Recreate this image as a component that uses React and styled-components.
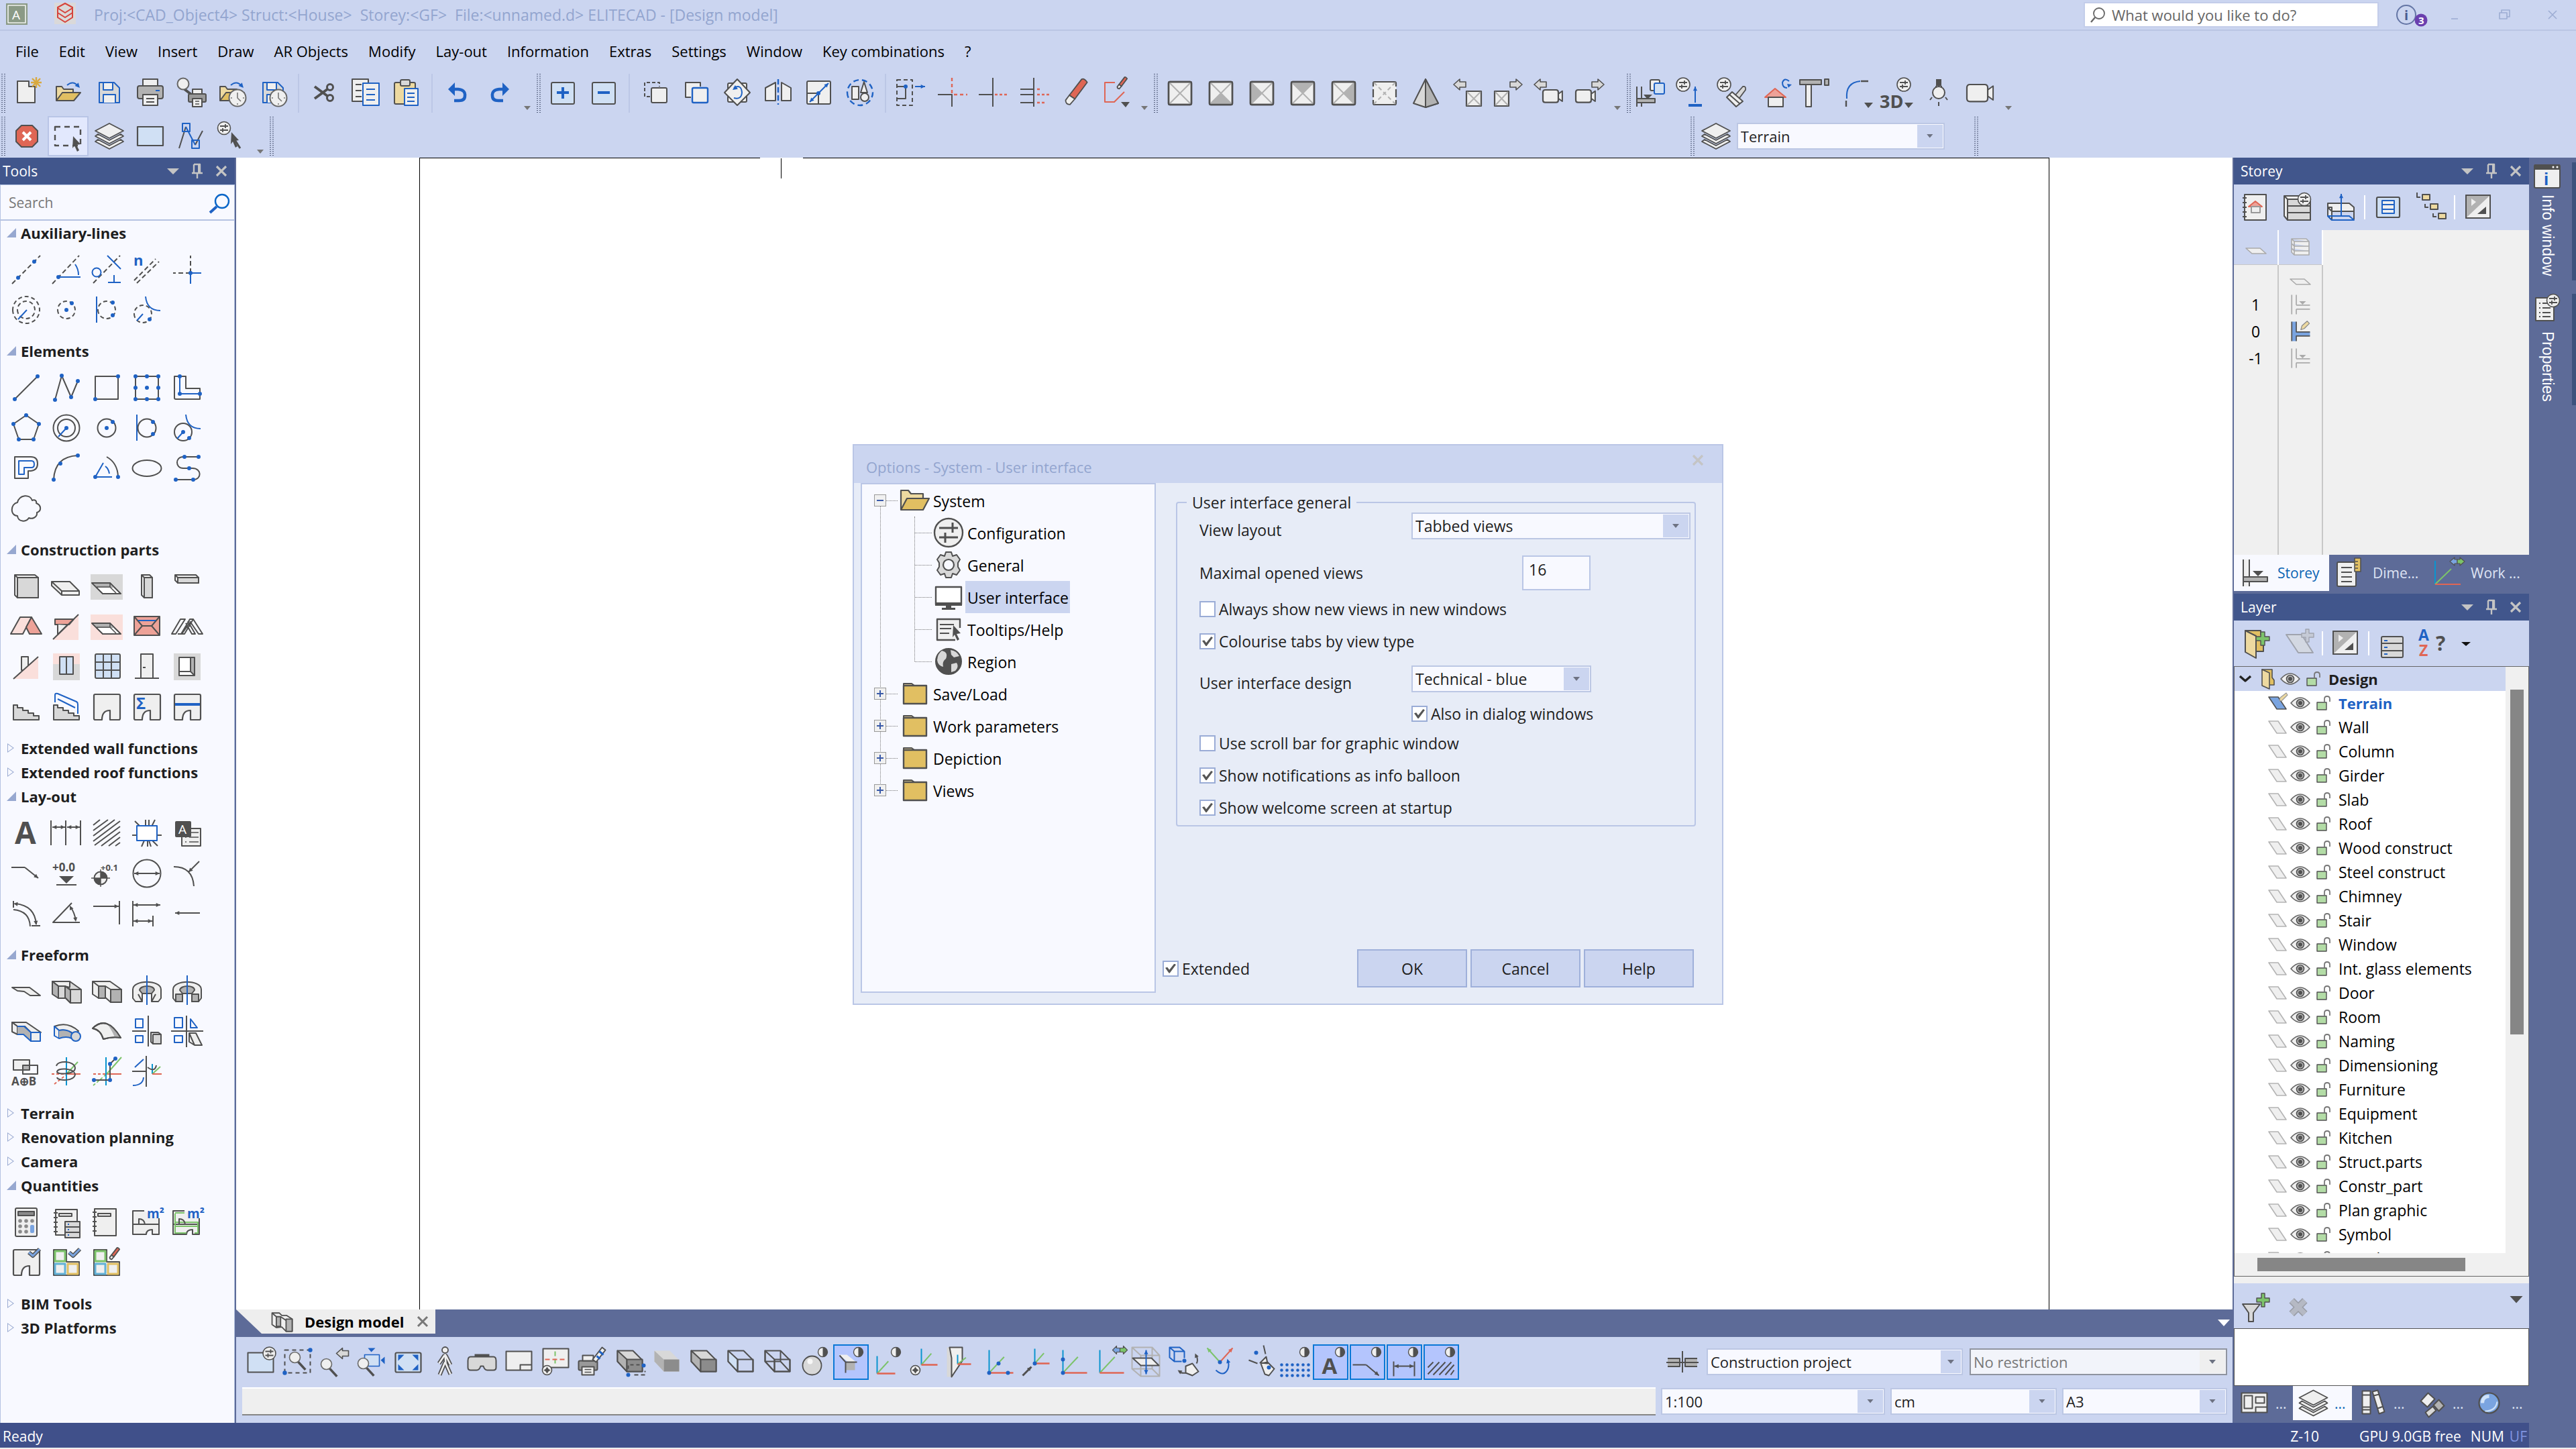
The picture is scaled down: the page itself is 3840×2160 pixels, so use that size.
import React from "react";
import styled, { createGlobalStyle, css } from "styled-components";

/* ---------- palette ---------- */
const K = "#505050";
const B = "#1f62c4";
const F = "#efefef";
const G = "#d8d8d8";
const M = "#b2b2b2";
const R = "#df6655";
const PK = "#fadfdb";
const SR = "#eda298";
const N = "#7cc36a";
const Y = "#e1bf62";
const YL = "#edd9a0";
const LB = "#d0e0f4";
const C = "#0a94cf";
const AB = "#7aa4e0";

const bar = "#cbd5f0";
const paper = "#f8f9ff";
const edge = "#b5c3e2";
const header = "#41568c";
const dock = "#5d6b98";
const status = "#40508a";

/* ---------- icon drawing helpers, all on a 60 x 60 field ---------- */
const p = (d, fill = "none", stroke = K, w = 2, dash) => ({ d, fill, stroke, w, dash });
const b = (d, fill = "none", w = 2) => p(d, fill, B, w);
const fl = (d, fill = K) => p(d, fill, "none", 0);
const tx = (text, x, y, size, fill = K, weight = 700) => ({ text, x, y, size, fill, weight });
const ci = (x, y, r) => `M${x - r} ${y}a${r} ${r} 0 1 0 ${2 * r} 0a${r} ${r} 0 1 0 ${-2 * r} 0Z`;
const re = (x, y, w, h) => `M${x} ${y}h${w}v${h}h${-w}Z`;
const rr = (x, y, w, h, r = 2) =>
  `M${x + r} ${y}h${w - 2 * r}q${r} 0 ${r} ${r}v${h - 2 * r}q0 ${r} ${-r} ${r}h${2 * r - w}q${-r} 0 ${-r} ${-r}v${2 * r - h}q0 ${-r} ${r} ${-r}Z`;
const dots = (list, r = 3, c = B) =>
  fl(list.split(" ").map((s) => { const [x, y] = s.split(",").map(Number); return ci(x, y, r); }).join(""), c);
const head = (x1, y1, x2, y2, c = K, s = 7) => {
  const a = Math.atan2(y2 - y1, x2 - x1);
  const q = (t) => `${x2 - s * Math.cos(a + t)} ${y2 - s * Math.sin(a + t)}`;
  return fl(`M${x2} ${y2}L${q(0.45)}L${q(-0.45)}Z`, c);
};
const ar = (x1, y1, x2, y2, c = K, w = 2) => [p(`M${x1} ${y1}L${x2} ${y2}`, "none", c, w), head(x1, y1, x2, y2, c)];
const dbl = (x1, y1, x2, y2, c = K) => [ar(x1, y1, x2, y2, c), head(x2, y2, x1, y1, c)];

const badge = (x, y, r = 9.5) => [
  p(ci(x, y, r), F, K, 1.6),
  p(`M${x - 6} ${y - 3}h12M${x - 6} ${y + 3}h12M${x + 2} ${y - 6}v6M${x - 2} ${y}v6`, "none", K, 1.8),
];
const contrast = (x, y) => [p(ci(x, y, 7), F, K, 1.4), fl(`M${x} ${y - 7}a7 7 0 0 1 0 14Z`)];
const clock = (x, y) => [p(ci(x, y, 12.5), F, "#666", 2), p(`M${x} ${y - 8}v8l5 5M${x - 10} ${y}h2M${x + 8} ${y}h2M${x} ${y + 8}v2`, "none", "#777", 1.6)];
const mag = (x, y, r = 8) => [p(`M${x + r * 0.6} ${y + r * 0.8}l11 12`, "none", K, 3.6), p(ci(x, y, r), F, "#6a6a6a", 1.6)];
const axes = (x = 16, y = 46, h = 34, w = 33) => [
  p(`M${x} ${y}v${-h}`, "none", C, 2), p(`M${x} ${y}l${w * 0.62} ${-h * 0.7}`, "none", N, 2), p(`M${x} ${y}h${w}`, "none", R, 2.6),
];
const targ = (x, y) => [p(ci(x, y, 7), F, K, 1.6), fl(`M${x} ${y - 5}l2 3l3 2l-3 2l-2 3l-2 -3l-3 -2l3 -2Z`)];
const folder = [p("M12 41V20H20L23 24H37V30", YL), p("M12 41L21 29H48L38 41Z", Y), b("M28 18q9 -8 17 2"), head(39, 13, 47, 22, B, 8)];
const floppy = [b("M15 14H37L45 22V44H15Z", G), b("M21 14H35V25H21Z", F), b("M21 44V32H39V44", F)];
const printer = [p(rr(11, 19, 38, 19, 3), M), p(re(19, 9, 22, 10), F), p(re(19, 32, 22, 16), F), p("M24 38h12M24 43h12"), b("M38 26h6")];
const room = p("M23 49H13Q11 49 11 47V13Q11 11 13 11H48Q50 11 50 13V47Q50 49 48 49H35V35Q23 35 23 49Z", F, K, 2.2);
const hole = [p("M8 25H35L51 41H24Z", "#fff", K, 1.8), fl("M10 26H35L42 32H16Z", M), p("M8 25H35L51 41H24ZM35 25V31L44 40M15 31H35", "none", K, 1.6)];
const cursor = (x, y) => fl(`M${x} ${y}l11 12l-6 1l4 8l-3 2l-4 -9l-3 4Z`);
const eraser = (x, y, s = 1) => [
  p(`M${x} ${y}l${20 * s} ${-26 * s}q${4 * s} ${-2 * s} ${9 * s} ${5 * s}l${-20 * s} ${27 * s}Z`, R, K, 1.8),
  p(`M${x} ${y}l${-6 * s} ${8 * s}q0 ${7 * s} ${7 * s} ${7 * s}l${8 * s} ${-9 * s}Z`, F, K, 1.8),
];
const cube = (front, top, side, s = K) => [
  p("M12 13H35L49 27V44H26L12 29Z", top, s), p("M12 13L26 26V44L12 29Z", side, s), p("M26 26H49V44H26Z", front, s),
];
const xbox = (part) => [
  p(rr(13, 13, 34, 34, 2), F, K, 2.4), part ? fl(part, M) : null, p("M14 14L46 46M46 14L14 46", "none", M, 2), p(rr(13, 13, 34, 34, 2), "none", K, 2.4),
].filter(Boolean);
const cam = (x, y, s = 1) => [p(`M${x + 27 * s} ${y + 7 * s}l${7 * s} ${-5 * s}v${18 * s}l${-7 * s} ${-5 * s}Z`, F), p(rr(x, y, 27 * s, 22 * s, 4 * s), F, K, 2.2)];
const larrow = (x, y, dir = 1) => p(`M${x} ${y}l${9 * dir} -8v4h${9 * dir}v8h${-9 * dir}v4Z`, G, K, 1.6);
const stack = [p("M9 38L30 49L51 38L47 35L30 44L13 35Z", F, K, 1.8), p("M9 30L30 41L51 30L47 27L30 36L13 27Z", F, K, 1.8), p("M9 22L30 11L51 22L30 33Z", F, K, 1.8)];
const book = [p(re(14, 11, 32, 38), F), p("M11 16h6M11 23h6M11 30h6M11 37h6M11 44h6")];
const hatch = "M10 18L20 10M10 26L32 10M10 34L42 10M10 42L50 12M12 48L50 20M22 49L50 28M33 49L50 36M43 49L50 44";
const plane = (f, s) => p("M17 21H31L43 39H29Z", f, s, 1.6);
const invert = [p(re(12, 12, 36, 34), F), fl("M13 13H47L13 45Z", M), fl("M20 17L27 22L20 28Z", F), fl("M42 29V40H29Z"), p(re(12, 12, 36, 34))];
const storeyMark = (c, f) => [p("M15 13V47M23 13V31M23 38V47M23 38H47M23 31H47", "none", c, 2), fl("M28 24L40 24L34 30Z", f || c)];
const dkdash = (d) => p(d, "none", K, 2, "7 4");
const tang = (dash) => [p(ci(24, 36, 13), "none", K, 2, dash), b("M28 10Q30 31 50 31"), b("M24 36L15 46")];

const ICONS = {
  /* auxiliary lines */
  aLine: [dkdash("M9 51L51 9"), dots("18,42 42,18")],
  aAngle: [dkdash("M9 51L49 9"), b("M18 41H51M43 22Q48 29 48 38"), dots("18,41")],
  aPerp: [dkdash("M10 50L50 9"), b(ci(15, 34, 6.5)), b("M31 9L51 29M32 49H51M41 38V49")],
  aPar: [tx("n", 10, 24, 22, B), dkdash("M11 46L43 14M15 50L48 18")],
  aCross: [dkdash("M35 35V9M35 35H9"), b("M35 35H51M35 35V51"), dots("35,35")],
  aCirc2: [p(ci(30, 30, 20), "none", K, 2, "6 4"), p(ci(30, 30, 13), "none", K, 2, "6 4"), b("M31 30L18 44")],
  aCirc: [p(ci(30, 30, 13), "none", K, 2, "6 4"), dots("30,30 38,20")],
  aLineCirc: [b("M15 10V49"), p(ci(30, 30, 13), "none", K, 2, "6 4"), dots("39,19 39,38")],
  aTang: [tang("6 4"), dots("34,44")],
  /* elements */
  eLine: [p("M13 47L47 13"), dots("13,47 47,13")],
  ePoly: [p("M13 48L23 12L37 44L47 20"), dots("13,48 23,12 37,44 47,20")],
  eRect: [p(re(13, 13, 34, 34)), dots("13,47 47,13")],
  eRect9: [p(re(13, 13, 34, 34)), dots("13,13 30,13 47,13 13,30 30,30 47,30 13,47 30,47 47,47")],
  eL: [p("M11 13H28V31H49V47H13Q11 47 11 45Z"), b("M19 13V39H49"), dots("19,13 19,39 49,39")],
  ePenta: [p("M30 11L11 24L19 47H41L49 24Z"), dots("30,11 11,24 19,47 41,47 49,24")],
  eCirc2: [p(ci(30, 30, 19.5)), p(ci(30, 30, 13)), b("M30 30L18 43"), dots("30,30")],
  eCirc: [p(ci(30, 30, 13.5)), dots("30,30 39,21")],
  eLineCirc: [b("M15 10V49"), p(ci(30, 30, 13.5)), dots("39,21 39,39")],
  eTang: [tang(), dots("24,36 33,45")],
  eP: [p("M13 13H37Q47 13 47 23T37 34H33V45H13Z"), b("M19 19H38Q42 19 42 24T38 29H27V39H19Z")],
  eArc: [p("M11 47C12 24 24 12 47 11"), dots("11,47 21,23 47,11")],
  eArcA: [b("M13 43H38M13 43L25 22M28 27Q33 31 34 38"), p("M30 13Q46 22 47 42"), dots("13,43 47,43")],
  eEll: [p("M8.500 30a21.500 12 0 1 0 43 0a21.500 12 0 1 0 -43 0Z")],
  eS: [p("M47 13H24C12 13 12 30 24 30H38C52 30 52 47 39 47H13"), dots("26,13 47,13 33,30 13,47 39,47")],
  eCloud: [p("M17 21C20 9 36 8 39 18C43 16 46 19 45 22C53 25 53 34 46 36C47 44 38 46 34 44C30 51 18 50 17 41C6 41 6 23 17 21Z")],
  /* construction parts */
  cWall: [p("M13 13H43L48 17V47H17L13 43Z", F), p(re(17, 17, 31, 30), G), p("M13 13L17 17")],
  cSlab: [p("M8 23H35L49 37V43H23L8 29Z", F), p("M8 23L23 37H49M23 37V43")],
  cHole: [fl(re(6, 12, 48, 38), G), hole],
  cCol: [p("M22 13H34L38 17V47H26L22 43Z", F), p(re(26, 17, 12, 30), G), p("M22 13L26 17")],
  cBeam: [p("M12 13H43L47 17V25H16L12 21Z", F), p(re(16, 17, 31, 8), G), p("M12 13L16 17")],
  cRoof: [p("M7 41L21 16H38L25 41Z", PK), p("M38 16L53 41H35L30 31Z", SR)],
  cDorm: [fl("M10 50L48 13V50Z", PK), p("M13 19H41L34 27H13Z", SR), p("M17 27V42L31 28", F), p("M10 49L48 12")],
  cRHole: [fl(re(6, 12, 48, 38), PK), hole],
  cHip: [p(re(11, 15, 38, 28), SR), p("M11 15L23 29H37L49 15M11 43L23 29M37 29L49 43"), b("M17 21H43")],
  cRaft: [p("M7 41H13L27 19H20ZM21 41L34 19H39L26 41ZM39 19L53 41H47L34 22M16 41H22L34 24M28 25L37 41H42L31 22")],
  cChim: [p(re(23, 15, 10, 20), F), fl("M11 48L48 15V48Z", PK), p("M11 48L48 15")],
  cWin: [fl(re(10, 10, 40, 16), PK), fl(re(10, 26, 40, 24), G), p(re(20, 15, 20, 26), LB), p("M30 15V41")],
  cGrid: [p(rr(13, 11, 37, 36), LB), p("M25 11V47M37 11V47M13 23H50M13 35H50")],
  cDoor: [p("M21 47V11H39V47", F), p("M12 47H48M24 31H28")],
  cNiche: [fl(re(10, 10, 40, 40), G), p(re(18, 16, 23, 27), "#fff"), fl("M35 17H40V42L35 37Z", M), p("M18 37H35V16M35 37L41 43")],
  cStair: [p("M11 27H17V31H25V35H33V39H41V43H49V49H11Z", G)],
  cStairR: [p("M11 27H17V31H25V35H33V39H41V43H49V49H11Z", G), b("M13 23V12Q13 9 17 10L45 22Q47 23 47 26V40M17 18L43 31")],
  cRoom: [room],
  cRoomS: [room, tx("Σ", 14, 33, 24, B)],
  cRoomB: [room, b("M12 26H49", "none", 4)],
  /* lay-out */
  lA: [tx("A", 13, 46, 46)],
  lDim: [p("M7 11V48M29 11V48M51 11V48"), dbl(9, 21, 28, 21), dbl(31, 21, 50, 21)],
  lHatch: [p(hatch)],
  lCut: [p("M12 12L20 20M28 10V20M33 10V20M42 10L37 20M22 50L26 41M31 50V41M36 50L33 41M38 41L46 49M8 33H15M45 33H52"), b(re(15, 19, 30, 22), "#fff")],
  lLabel: [p(re(22, 23, 28, 26), F), p("M36 29h11M27 36h2M33 36h14M27 43h2M33 43h14", "none", K, 1.6), fl(rr(12, 12, 24, 24)), tx("A", 17, 31, 19, "#fff", 400)],
  lLead: [p("M8 21H28"), ar(28, 21, 48, 37)],
  lLevel: [tx("+0.0", 9, 27, 17), fl("M19 34H41L30 45Z"), p("M15 47H45")],
  lPoint: [tx("+0.1", 21, 26, 13), p(ci(21, 37, 9.5), F), fl("M21 37V27.500A9.500 9.500 0 0 1 30.500 37ZM21 37V46.500A9.500 9.500 0 0 1 11.500 37Z"), p("M7 37H35M21 24V50", "none", K, 1.4)],
  lDia: [p(ci(30, 30, 20.5)), dbl(11, 30, 49, 30)],
  lRad: [p("M10 20Q38 20 40 49"), ar(48, 12, 32, 28)],
  lArc: [p("M11 11V21M11 24Q35 26 36 49M38 48H51M14 15Q43 18 45 46"), head(20, 16, 11, 15), head(44, 38, 45, 47)],
  lAng: [p("M38 14L10 43H50M36 20Q42 28 44 40"), head(39, 26, 35, 18), head(43, 34, 44, 42)],
  lTo: [ar(10, 19, 48, 19), p("M49 11V46")],
  lDim2: [p("M9 11V49M39 33V49"), dbl(10, 17, 50, 17), dbl(10, 41, 38, 41)],
  lBack: [ar(49, 29, 12, 29)],
  /* freeform */
  fFlat: [p("M9 24H35L51 36H36L27 30L17 29Z", F)],
  fTube: [p("M9 15H35V24L27 22L18 22Z", F), p("M35 15L52 27V47H36L28 39V22L36 27V47M35 15V24M36 27H52", G), p("M9 15L18 22V40L9 34Z", M), p("M18 22H28V40H18Z", G), p("M28 22L36 28V47L28 39Z", M)],
  fSolid: [p("M9 15H35L52 27V46H36L27 38L18 40L9 34Z", F), p("M18 22H28V40H18Z", M), p("M36 27H52V46H36Z", M), p("M9 15L18 22M28 22L36 27")],
  fRev: [p("M9 27C9 12 51 12 51 27V40L47 45H37V33H23V45H13L9 40Z", F), p("M19 28C20 20 41 20 41 28L37 33H23Z", M), p("M17 34L23 45M43 34L37 45"), b("M30 6V50")],
  fRev2: [p("M9 27C9 12 51 12 51 27V40L47 45H37V33H23V45H13L9 40Z", F), p("M19 28C20 20 41 20 41 28L37 33H23Z", M), p(re(13, 34, 10, 11), M), p(re(37, 34, 10, 11), M), b("M30 6V50")],
  fSweep: [p("M9 16H30L52 31H37L28 22L17 22Z", F), p("M9 16L17 22V34L9 30Z", F), b("M17 22H27L37 31V44L26 34L17 34", M), b(re(37, 31, 14, 13), F)],
  fPipe: [p("M12 22Q32 14 48 29L42 34Q32 26 19 28Z", F), b("M12 22L19 28V40L12 36Z", F), b("M19 28Q32 25 40 34L38 40Q30 36 19 40", M), b(ci(44, 37, 7), G)],
  fShell: [p("M9 25Q30 4 51 39Q38 37 25 41Q21 27 9 25Z", F), fl("M33 18Q42 24 50 38L42 38Q36 24 30 18Z", M), p("M9 25Q30 4 51 39Q38 37 25 41Q21 27 9 25Z")],
  fViews: [p("M8 29H29M32 6V52"), b(re(13, 11, 11, 13)), b(re(13, 36, 11, 10)), p("M36 31H47L51 34V48H39L36 45ZM39 34H51M39 34V48", G)],
  fViews2: [p("M6 29H54M29 6V53"), b(re(11, 9, 12, 15)), b(re(11, 36, 12, 10)), b("M35 11V24H45Z"), p("M33 32H43L52 50H41L33 45ZM33 32L41 50", F)],
  fBool: [p(re(11, 12, 24, 15), F), p(re(25, 20, 22, 13), "none"), fl(re(26, 21, 8, 5), M), tx("A⊕B", 8, 50, 17)],
  fSpring: [p("M8 33H30M12 48L30 34", "none", R, 1.8, "4 3"), p("M30 33H51", "none", R), p("M30 33L47 15", "none", N), p("M30 8V50", "none", C), p("M15 21C17 12 42 13 43 24C43 34 17 34 16 30C16 23 40 24 43 33C43 44 17 44 16 38")],
  f3d: [p("M10 33H30", "none", R, 1.8, "4 3"), p("M10 50L30 33", "none", N, 1.8, "4 3"), p("M30 33H52", "none", R), p("M30 33L52 8", "none", N), p("M29 8V50", "none", C), p("M11 42H35V18L43 10"), dots("11,42 35,42 35,18 43,10")],
  fCurve: [p("M8 29H29M29 6V52"), b("M12 23L25 11M9 50Q24 50 25 38"), p("M38 33V18", "none", C), p("M38 33L50 22", "none", N), p("M38 33H52", "none", R), p("M31 23Q42 31 44 20")],
  /* quantities */
  qCalc: [p(rr(14, 9, 32, 42), F), p(re(18, 14, 24, 6), "#8a8a8a"), dots("21,28 30,28 39,28 21,36 30,36 21,44 30,44", 2.8, "#8a8a8a"), fl(rr(36, 34, 6, 12), AB)],
  qBookDb: [book, p(re(19, 17, 19, 4)), p(re(28, 29, 22, 24), G), p("M28 37H50M28 45H50"), b("M32 33h2M32 41h2M32 49h2")],
  qBook: [p(re(12, 10, 32, 40), F), p("M9 15h6M9 22h6M9 29h6M9 36h6M9 43h6"), p(re(17, 17, 19, 4))],
  qArea: [p("M48 24V48H38V41Q29 41 29 48H9V13H26M9 33H48M18 33V25Q26 25 27 33", F), tx("m²", 30, 24, 19, B)],
  qAreaG: [p("M48 24V48H38V41Q29 41 29 48H9V13H26M9 33H48", F), p("M12 16H26M12 17V46H29M12 30H46V46H41M13 36H46", "none", N), p("M18 33V25Q26 25 27 33M9 13V48"), tx("m²", 30, 24, 19, B)],
  qRoomOk: [room, p("M34 15L40 20L50 10", "none", K, 6), p("M34 15L40 20L50 10", "none", AB, 3)],
  qColOk: [p("M11 11H30V29H49V49H11Z", F), p(re(13, 13, 15, 15), "none", N, 3), p(re(13, 32, 15, 15), "none", "#62b1d6", 3), p(re(32, 32, 15, 15), "none", Y, 3), p("M34 15L40 20L50 10", "none", K, 6), p("M34 15L40 20L50 10", "none", AB, 3)],
  qColDel: [p("M11 11H30V29H49V49H11Z", F), p(re(13, 13, 15, 15), "none", N, 3), p(re(13, 32, 15, 15), "none", "#62b1d6", 3), p(re(32, 32, 15, 15), "none", Y, 3), eraser(37, 19, 0.42)],
  /* main toolbar */
  new: [p("M15 12H32V20H41V44H15Z", F), p("M43 6V22M35 14H51M37 8L49 20M49 8L37 20", "none", "#d9a93f", 2.4)],
  open: folder,
  save: floppy,
  print: printer,
  preview: [p("M20 24L33 34", "none", K, 4), p(ci(18, 16, 8.5), F, "#666"), p(rr(26, 31, 26, 12), "#999"), p(re(32, 24, 14, 7), F), p(re(32, 38, 14, 12), F), p("M36 42h6M36 46h6", "none", K, 1.4)],
  openRecent: [folder, clock(38, 37)],
  saveRecent: [floppy, clock(38, 37)],
  cut: [p("M15 20L34 34M15 38L34 24", "none", K, 4), p(ci(38, 21, 4.5), "none", K, 3), p(ci(38, 37, 4.5), "none", K, 3)],
  copy: [p("M28 42H10V9H34V15", F), p("M15 17h9M15 26h9M15 35h9"), b(re(26, 15, 24, 33), F), b("M31 24h13M31 32h13M31 40h13")],
  paste: [p(rr(12, 14, 31, 32), YL), p(rr(21, 10, 14, 9), G), b(re(27, 23, 20, 25), F), b("M31 30h11M31 36h11M31 42h11")],
  undo: [p("M22 24H30Q41 25 40 34Q40 41 31 41H24", "none", B, 4.5), fl("M15 24L25 14V34Z", B)],
  redo: [p("M38 24H30Q19 25 20 34Q20 41 29 41H36", "none", B, 4.5), fl("M45 24L35 14V34Z", B)],
  plus: [p(rr(13, 14, 34, 32), LB), b("M30 21V38M21 29H39", "none", 4)],
  minus: [p(rr(13, 14, 34, 32), LB), b("M21 29H39", "none", 4)],
  move: [p("M22 35H14V14H36V20", "none", K, 2, "5 3"), p(rr(24, 22, 23, 22), F)],
  duplicate: [p("M22 36H14V14H36V20", F), b(rr(24, 22, 23, 22), F, 2.4)],
  rotate: [p(rr(16, 15, 28, 28), F), p("M30 9L49 29L30 48L11 29Z", F), b("M25 22Q36 16 37 29Q36 40 25 37"), head(30, 20, 23, 25, B, 8)],
  mirror: [p("M11 22L26 14V41H11Z", F), p("M49 22L35 14V41H49Z", F), p("M30 9V47", "none", B, 2.4, "8 4")],
  scale: [p(rr(12, 12, 35, 34), F), p("M12 30H29V46"), dbl(16, 43, 44, 15, B), dots("29,30")],
  group: [p(ci(30, 29, 19), "none", B, 2.4, "8 5"), p(re(18, 20, 10, 19), F), p("M36 13L31 29H41Z", F), p(ci(37, 36, 6), F)],
  stretch: [p(re(8, 10, 23, 38), "none", K, 2, "6 4"), p("M8 20H21V38H8"), dots("21,20"), ar(35, 20, 50, 20, B)],
  trim: [p("M8 32H29V50"), p("M29 7V32M32 32H52", "none", R, 2.4, "5 4")],
  extend: [p("M8 32H29M29 7V50"), p("M32 32H52", "none", R, 2.4, "4 3")],
  extendAll: [p("M9 24H29M9 32H29M9 44H29M29 7V50"), p("M34 24H38M34 32H54M34 44H46", "none", R, 2.4, "4 3")],
  eraser: [eraser(21, 33, 0.92)],
  partErase: [p("M28 14H13V43H27L42 28", "none", R), eraser(34, 17, 0.42), fl("M37 43H50L44 51Z")],
  vTop: xbox(),
  vFront: xbox("M30 30L46 46H14Z"),
  vLeft: xbox("M14 14L30 30L14 46Z"),
  vBack: xbox("M14 14H46L30 30Z"),
  vRight: xbox("M46 14V46L30 30Z"),
  vBottom: [fl(rr(13, 13, 34, 34), F), p("M13 20V15Q13 13 15 13H45Q47 13 47 15V20M13 24V36M47 24V36M13 40V45Q13 47 15 47H45Q47 47 47 45V40", "none", K, 2.2), p("M14 14L46 46M46 14L14 46", "none", M, 2, "6 4")],
  pyramid: [p("M30 9L12 45L30 51L49 45Z", G), p("M30 9L49 45L30 51Z", M)],
  vPrev: [larrow(11, 17), p(re(30, 27, 22, 22), F, K, 2.2), p("M31 28L51 48M51 28L31 48", "none", M)],
  vNext: [larrow(52, 17, -1), p(re(11, 27, 21, 22), F, K, 2.2), p("M12 28L31 48M31 28L12 48", "none", M)],
  cPrev: [larrow(9, 17), cam(22, 25, 0.85)],
  cNext: [larrow(52, 17, -1), cam(10, 25, 0.85)],
  storeyCopy: [p("M6 20V50M13 20V38M13 45V50"), p(re(6, 38, 27, 6), M), fl("M16 32H29L22 39Z"), p(rr(26, 10, 14, 16), F), b(rr(32, 15, 15, 16), LB)],
  heightSet: [badge(14, 17, 10), ar(32, 44, 32, 20, B), b("M22 48H42", "none", 4)],
  paint: [badge(14, 17, 10), p("M28 36L42 20Q47 19 46 25L34 41Z", G, K, 1.8), p("M18 36L26 28L42 42L32 50Z", F), p("M22 32L38 46", "none")],
  house: [p("M14 36L29 23L45 36Z", SR, R), p(re(19, 36, 22, 14), F), b("M50 12Q43 6 40 14Q40 22 47 22"), head(44, 20, 54, 17, B)],
  text3: [p(re(5, 10, 32, 7), M), p(re(14, 17, 8, 33), F), p(re(42, 9, 6, 9), M)],
  fillet: [b("M14 38Q12 14 34 12"), p("M35 12H46M13 41V50", "none", K, 2.4), fl("M40 44H53L46 52Z")],
  d3: [badge(38, 17, 10), tx("3D", 2, 52, 27), fl("M39 44H52L45 52Z")],
  bulb: [p(ci(29, 29, 9), F), fl("M25 9H33V19H25Z"), p("M25 19V22M33 19V22M16 40L19 36M42 40L39 36M29 43V49")],
  camera: cam(10, 17, 1.15),
  stop: [p("M21 14H37L45 22V38L37 46H21L13 38V22Z", R, K), p("M23 24L35 36M35 24L23 36", "none", "#fff", 4)],
  select: [p(re(10, 16, 38, 28), "none", K, 2.4, "8 6"), cursor(37, 30)],
  layers: stack,
  rect: [p(re(11, 16, 38, 28), LB, K, 2.2)],
  nodes: [p("M12 48L22 16M36 43L47 22"), b("M22 16L36 43"), b(re(17, 11, 11, 12)), b(re(31, 36, 11, 12))],
  pick: [badge(18, 18, 9.5), cursor(29, 24), p("M33 34L42 48", "none", K, 3)],
  /* view toolbar */
  viewSet: [p(re(11, 16, 38, 29), LB), badge(43, 17)],
  zoomWin: [p(re(11, 12, 38, 34), "none", K, 2, "6 5"), dots("49,12 11,46", 3.2), mag(26, 23)],
  zoomPrev: [mag(18, 33), larrow(33, 17)],
  zoomPart: [b(re(20, 19, 22, 17), LB, 1.6), mag(18, 32), fl("M25 9H36L30 15ZM50 22V33L44 27Z", B)],
  zoomAll: [p(rr(11, 16, 38, 29), LB, K, 2.2), fl("M15 19H24L15 28ZM45 19H36L45 28ZM15 42H24L15 33ZM45 42H36L45 33Z", B)],
  walk: [p("M30 18L31 32L38 48M30 30L22 49M29 20L21 32M31 20L38 34", "none", K, 6), p("M30 18L31 32L38 48M30 30L22 49M29 20L21 32M31 20L38 34", "none", F, 2.6), p(ci(30, 12, 4.5), F, K, 1.8)],
  vr: [fl(re(19, 18, 22, 6)), p("M13 22H47Q51 22 51 28V38Q51 42 47 42H38Q34 42 32 36H28Q26 42 22 42H13Q9 42 9 38V28Q9 22 13 22Z", G)],
  sheet: [p(re(11, 14, 38, 28), F), p("M32 42V34H49")],
  origin: [p(re(11, 10, 38, 28), F), p("M29 14V34", "none", N, 2, "7 4"), p("M14 26H46", "none", R, 2, "7 4"), targ(17, 42)],
  printPen: [p(rr(9, 28, 28, 14), "#999"), p(re(15, 20, 16, 8), F), p(re(14, 37, 18, 12), F), p("M18 41h10M18 45h10", "none", K, 1.6), p("M30 26L44 8L49 12L35 30Z", F), b("M36 21L41 25M40 14L46 19", "none", 3)],
  hidden: [cube("#8c8c8c", G, M), p("M28 40V34H46", "none", K, 2, "5 4"), dots("51,35 28,49", 3), p("M37 49H53V43", "none", K, 2, "6 4")],
  shadeFlat: cube("#8c8c8c", G, M, "none"),
  shade: cube("#8c8c8c", G, M),
  wire: cube("none", "none", LB),
  wireAll: [cube("none", "none", "none"), p("M12 29H35L49 44M35 13V29")],
  sphere: [p(ci(27, 35, 14), G, K, 1.8), fl(ci(24, 29, 4), "#f7f7f7"), contrast(43, 15)],
  wallView: [p("M12 19H24L38 30H26Z", F, "none"), fl(re(22, 30, 14, 12), M), p("M13 20L22 30V46M22 30H39"), contrast(41, 15)],
  axC: [axes(14, 47, 26, 27), contrast(42, 15)],
  axT: [axes(25, 34, 24, 24), targ(16, 42)],
  axDoor: [fl("M8 8H26L18 24V52H8Z", G), p("M12 8H31V28L15 52V24Z", F), axes(24, 33, 14, 20)],
  axDots: [axes(16, 46, 34, 36), dots("16,46 30,32 44,46")],
  axPick: [axes(29, 32, 22, 22), dots("29,32"), ar(11, 50, 24, 37, K, 3)],
  axDots2: [axes(16, 46, 34, 36), dots("16,46 16,26")],
  axArrows: [axes(16, 46, 34, 36), p("M35 12L41 6V9H47V15H41V18Z", AB, K, 1.2), p("M57 12L51 6V9H46V15H51V18Z", N, K, 1.2)],
  cage: [p("M9 8H39L50 20V51H22L9 40ZM9 8L22 20H50M22 20V51M9 40H39V8M39 40L50 51", "none", M), p("M10 24H38L49 35H22Z", F), dbl(30, 12, 30, 48, B)],
  cubeRot: [b("M10 8H25L32 14V24M10 8L17 14V29L10 23ZM17 14H32M17 29H28"), dots("32,28", 3), p("M34 36L44 32L53 44L44 50L34 46Z", F), p("M50 20Q53 28 50 32M24 44Q27 47 35 46"), head(51, 24, 48, 17), head(30, 47, 22, 42)],
  axV: [ar(30, 30, 11, 9, N), ar(30, 30, 49, 9, R), dots("30,30"), b("M24 42Q36 53 42 40Q44 34 42 28"), head(44, 36, 41, 25, B)],
  penRot: [p("M40 5L43 18M18 27L31 32"), dots("29,16"), p("M35 31L44 22L46 32ZM36 32L46 30L56 40L48 50L42 48Z", F), dots("48,38")],
  gridPts: [dots("12,34 20,34 28,34 36,34 44,34 52,34 12,42 20,42 28,42 36,42 44,42 52,42 12,50 20,50 28,50 36,50 44,50 52,50", 2.3), contrast(46, 15)],
  vA: [tx("A", 17, 47, 33), contrast(44, 15)],
  vLead: [p("M8 34H28"), ar(28, 34, 47, 50), contrast(43, 15)],
  vDim: [p("M14 29V51M45 29V51"), dbl(15, 36, 44, 36), contrast(43, 15)],
  vHatch: [p("M10 38L18 30M10 48L27 30M18 49L36 30M27 49L45 30M36 49L49 34M44 49L49 42"), contrast(43, 15)],
  rail: [p("M8 25H26V37H8M52 25H34V37H52", M, K, 2), p("M6 31H54M30 14V46", "none", K, 2)],
  /* docks */
  sBook: [book, p("M20 29L30 21L40 29Z", SR, R), p(re(24, 29, 13, 9), F, "#999")],
  sSet: [p("M9 13H43L48 18V49H14L9 43Z", F), p(re(14, 18, 34, 31), G), p("M14 28H48M14 38H48M9 13L14 18"), badge(39, 18)],
  sUp: [p("M10 24H42L49 30V36H16L10 30ZM10 30H16V48M49 30V48M10 24V43L16 49", F), b("M10 43L16 49H49L42 43Z"), ar(30, 44, 30, 10, B)],
  sList: [p(rr(13, 15, 34, 30), LB, K, 2.2), b(re(21, 20, 18, 19), F), b("M21 26H39M21 33H39")],
  sTree: [p("M9 8V15H14M21 25V30H26M33 39V44H38"), p(re(17, 11, 11, 8), YL), p(re(29, 25, 11, 8), YL), p(re(41, 39, 11, 8), YL)],
  invert,
  planeGrey: [p("M15 32H36L45 40H24Z", F, "#aaa", 1.6)],
  planeUp: [p("M15 32H36L45 40H24Z", F, "#aaa", 1.6)],
  boxGrey: [p("M17 18H39L43 22V42H21L17 38ZM17 18L21 22H43M21 22V42M17 25L21 29H43M17 32L21 36H43", F, "#aaa", 1.6)],
  lvl: storeyMark("#aaa"),
  lvlOn: [fl("M15 13H23V31H47V38H23V47H15Z", AB), p("M15 13V47M23 13V31H47M47 38H23V47"), p("M31 27L33 20L42 12L46 16L37 25Z", YL, "#888", 1.4)],
  tabStorey: [p("M12 10V50M21 10V50"), fl(re(13, 10, 7, 40), F), p(re(12, 36, 36, 7), M), fl("M26 27H42L34 35Z")],
  tabDime: [p(rr(10, 14, 28, 36), F), p("M16 22H32M16 29H32M16 36H32M16 43H32"), p(re(36, 8, 9, 20), Y, K, 1.6), p("M37 13h4M37 18h4M37 23h4", "none", K, 1.4)],
  tabWork: [p("M10 47V12", "none", C), p("M10 47L34 24", "none", N), p("M10 47H48", "none", R), p("M32 13L39 7V10H43V16H39V19Z", AB, K, 1.2), p("M54 13L47 7V10H43V16H47V19Z", N, K, 1.2)],
  layFold: [p("M13 11H36V17L40 20V42H30L13 30Z", Y), p("M13 11L29 19V52L13 43Z", YL), p("M29 20H36V13H42V20H49V26H42V33H36V26H29Z", N, K, 1.4)],
  layPlane: [p("M9 17H32L49 44H27Z", "#d3d8e2", "#a0a4ae"), p("M32 15H38V9H43V15H50V21H43V28H38V21H32Z", "#c5cad6", "#a0a4ae", 1.4)],
  layDb: [p(rr(14, 20, 32, 31), G), p("M14 30H46M14 41H46"), b("M18 26h5M18 36h5M18 46h5")],
  layAZ: [tx("A", 7, 26, 23, B), tx("Z", 8, 49, 23, R), tx("?", 33, 41, 30)],
  funnel: [p("M11 27H37L27 40V53H20V40Z", G), p("M32 18H39V11H44V18H51V24H44V31H39V24H32Z", N, K, 1.4)],
  bigX: [p("M18 20L42 44M42 20L18 44", "none", "#9a9ea8", 13), p("M18 20L42 44M42 20L18 44", "none", "#b5b9c4", 9)],
  bBlocks: [p(re(11, 15, 38, 29), F, K, 2.2), p(re(15, 19, 12, 19), F), p(re(32, 21, 13, 9), F), p("M32 44V36H49")],
  bBooks: [p(re(15, 12, 12, 34), F), p("M15 18H27M15 36H27M15 40H27"), p("M30 13L38 11L48 43L40 46ZM32 19L40 17M38 38L46 35", F)],
  bMat: [p("M14 27L25 15L35 24L24 36Z", F), p("M33 33L41 25L49 34L41 42Z", M), p("M21 44L32 35L37 41L26 51Z", G)],
  bSphere: [p(ci(28, 30, 15), AB, K, 2.2), p("M18 30Q18 20 28 20", "none", "#cfe2f8", 5), p("M22 42Q38 42 40 28", "none", "#cfe2f8", 2)],
  info: [p(rr(10, 12, 38, 34), F), fl(re(10, 11, 38, 8)), dots("38,15 44,15", 1.5, "#fff"), tx("i", 24, 42, 26, B)],
  props: [p(re(12, 14, 27, 34), F), p("M17 22h2M22 22h12M17 29h2M22 29h12M17 36h2M22 36h12M17 42h2M22 42h12"), badge(38, 18)],
  /* tree */
  folderOpen: [p("M10 44V15H21L25 20H43V28", YL, K, 2.2), p("M10 44L19 27H52L43 44Z", Y, K, 2.2)],
  folderShut: [p("M14 19V15H26L30 18", YL), p(re(14, 18, 34, 27), Y, K, 2.4)],
  config: [p(ci(30, 30, 21), F, K, 2.4), p("M16 23H44M16 37H44", "none", K, 3), p("M36 15V30M25 30V45", "none", K, 3)],
  gear: [p("M26 11H34L36 17L42 15L47 22L44 27V33L47 38L42 45L36 43L34 49H26L24 43L18 45L13 38L16 33V27L13 22L18 15L24 17Z", G, K, 2), p(ci(30, 30, 8), paper, K, 2.2)],
  monitor: [p(re(11, 15, 38, 26), "#fff", K, 2.4), fl(re(10, 38, 40, 5)), fl(re(26, 43, 8, 4)), fl(re(20, 46, 20, 3))],
  tips: [p("M47 28V15H13V46H40", F, K, 2.4), p("M17 23H38M17 29H34M17 36H31", "none", K, 2.2), cursor(37, 24)],
  globe: [p(ci(30, 30, 19), K, K, 2), fl("M20 14Q30 16 26 26Q20 30 22 38Q14 36 13 28Q14 18 20 14ZM33 13Q42 14 46 22L38 24L34 20ZM34 34L42 32Q46 38 40 44L34 46Z", G)],
  eye: [p("M16 30Q30 14 44 30Q30 46 16 30Z", F, "#666", 1.6), p(ci(30, 30, 5.5), M, K, 1.6), fl(ci(30, 30, 3))],
  lock: [p(re(21, 29, 14, 11), "#b3dca6", K, 1.4), p("M32 29V24Q32 20 36 20T40 24V28", "none", "#777", 1.8)],
  plane: plane(F, "#b4b4b4"),
  planeOn: [plane(AB, K), p("M33 27L34 22L43 15L45 18L37 26Z", YL, "#999", 1.2)],
  layerFolder: [p("M22 16H37V28L40 32V39H30Z", Y, K, 1.6), p("M22 16L33 21V45L22 40Z", YL, K, 1.6)],
  chevron: [p("M22 26L30 33L38 26", "none", "#222", 3.4)],
  caret: [fl("M21 26H39L30 35Z", "#c4c4c4")],
  pin: [p("M25 20V32M25 20H34V32M22 33H38M30 33V41", "none", "#c4c4c4", 2.4), fl(re(31, 20, 4, 12), "#c4c4c4")],
  close: [p("M23 23L37 37M37 23L23 37", "none", "#c4c4c4", 3.2)],
  closeTab: [p("M23 23L37 37M37 23L23 37", "none", "#777", 3)],
  search: [b("M26 36L16 45", "none", 4), p(ci(34, 28, 10), "none", "#0a66c8", 2.4)],
  searchTop: [p("M26 34L20 41", "none", "#666", 2.4), p(ci(32, 28, 8), "none", "#666", 1.8)],
  help: [p(ci(27, 30, 14), "none", "#6475a5", 2), tx("i", 24, 38, 20, "#4a5b90"), fl(ci(49, 38, 9.5), "#6a3fae"), tx("3", 45, 44, 15, "#fff")],
  min: [p("M23 36H33", "none", "#9dadd3", 1.6)],
  restore: [p("M22 27h11v9h-11ZM25 27v-4h12v10h-4", "none", "#9dadd3", 1.6)],
  closeWin: [p("M24 24L36 36M36 24L24 36", "none", "#9dadd3", 1.6)],
  appA: [fl(re(14, 13, 32, 32), "#8b9a86"), p(re(17, 16, 26, 26), "none", "#f2f4f0", 1.6), tx("A", 23, 37, 19, "#fff", 400)],
  appE: [fl(re(14, 12, 32, 32), "#dad9d9"), p("M19 19L30 13L41 19M19 18V34L30 41L41 34V18M19 20L30 27L41 20M19 27L30 34L41 27", "none", "#d6433b", 2)],
  drop: [fl("M23 28H37L30 34Z", "#111")],
  wallTab: [p("M13 16H25L29 20H37L46 26V46H36L29 39L20 40L13 35Z", F), p("M20 22H27V38H20ZM36 26H46V46H36Z", M), p("M13 16L20 22M27 22L36 28")],
};

function Icon({ name, size = 60, field = size }) {
  const shapes = [ICONS[name]].flat(Infinity);
  const o = 30 - field / 2;
  return (
    <Svg viewBox={`${o} ${o} ${field} ${field}`} $size={size} aria-hidden="true">
      {shapes.map((s, i) =>
        s.text ? (
          <text key={i} x={s.x} y={s.y} fontSize={s.size} fill={s.fill} fontWeight={s.weight}>{s.text}</text>
        ) : (
          <path key={i} d={s.d} fill={s.fill} stroke={s.stroke} strokeWidth={s.w} strokeDasharray={s.dash} strokeLinejoin="round" />
        )
      )}
    </Svg>
  );
}

const Svg = styled.svg`
  display: block;
  flex: none;
  width: ${(q) => q.$size}px;
  height: ${(q) => q.$size}px;
  overflow: visible;
`;

/* ---------- base ---------- */
const Global = createGlobalStyle`
  *, *::before, *::after { box-sizing: border-box; }
  body { margin: 0; background: #eee; color: #1e1e1e;
    font: 23px/28px "Open Sans", "Noto Sans", sans-serif; }
  button, input, select { font: inherit; color: inherit; margin: 0; }
  ul { list-style: none; margin: 0; padding: 0; }
`;

const Shell = styled.div`
  display: flex;
  flex-direction: column;
  height: 100vh;
  padding-bottom: 2px;
  overflow: hidden;
`;

const IconButton = styled.button`
  display: flex;
  align-items: center;
  justify-content: center;
  flex: none;
  width: ${(q) => q.$w || 61}px;
  height: ${(q) => q.$h || 60}px;
  padding: 0;
  border: 2px solid transparent;
  background: none;
  ${(q) => q.$on && css`background: #e2e8fd; border-color: #b9c5e6;`}
`;

/* ---------- title and menu ---------- */
const TitleBar = styled.header`
  display: flex;
  align-items: center;
  flex: none;
  height: 46px;
  background: ${bar};
  border-bottom: 2px solid #bac5e4;
`;
const AppIcons = styled.div`
  display: flex;
  gap: 26px;
  padding: 0 20px 0 2px;
`;
const Title = styled.h1`
  flex: 1;
  margin: 0;
  font-size: 23px;
  font-weight: 400;
  color: #93a5cf;
  white-space: pre;
`;
const TopSearch = styled.label`
  display: flex;
  align-items: center;
  width: 440px;
  height: 38px;
  margin-right: 10px;
  padding-left: 2px;
  background: #fff;
  border: 2px solid #c3cdea;
`;
const TopInput = styled.input`
  flex: 1;
  min-width: 0;
  border: 0;
  padding: 0 4px;
  background: none;
  font-size: 22px;
  outline: 0;
  &::placeholder { color: #666; opacity: 1; }
`;
const MenuBar = styled.nav`
  display: flex;
  align-items: center;
  flex: none;
  height: 62px;
  padding-left: 8px;
  background: ${bar};
`;
const MenuItem = styled.button`
  padding: 3px 15px 5px;
  border: 0;
  background: none;
  color: #000;
  font-size: 22px;
`;

/* ---------- toolbars ---------- */
const Toolbar = styled.div`
  display: flex;
  align-items: center;
  flex: none;
  height: ${(q) => q.$h || 62}px;
  padding: ${(q) => q.$pt || 0}px 0 0 ${(q) => q.$pl || 0}px;
  background: ${bar};
`;
const Grip = styled.span`
  flex: none;
  width: 6px;
  height: 58px;
  margin: 0 2px;
  background: repeating-linear-gradient(#55607e 0 1px, transparent 1px 3px) left / 2px 100% no-repeat,
    repeating-linear-gradient(#55607e 0 1px, transparent 1px 3px) right / 2px 100% no-repeat;
`;
const Rule = styled.span`
  flex: none;
  width: 2px;
  height: ${(q) => (q.$h === undefined ? 58 : q.$h)}px;
  margin: 0 ${(q) => (q.$m === undefined ? 7 : q.$m)}px;
  background: ${(q) => q.$c || "#bcc7e6"};
`;
const More = styled.button`
  align-self: flex-end;
  flex: none;
  width: 24px;
  height: 24px;
  padding: 0;
  border: 0;
  background: none;
  &::after {
    content: "";
    display: block;
    width: 10px;
    height: 6px;
    margin: 6px auto 0;
    background: #777;
    clip-path: polygon(0 0, 100% 0, 50% 100%);
  }
`;
const Spacer = styled.span`
  flex: ${(q) => q.$grow || 1};
`;

/* ---------- fields ---------- */
const SelectBox = styled.span`
  display: grid;
  grid-template-columns: 1fr ${(q) => q.$cap || 40}px;
  align-items: stretch;
  flex: none;
  width: ${(q) => q.$w}px;
  height: 40px;
  border: 2px solid ${(q) => q.$edge || "#bcc7e4"};
  background: ${(q) => q.$bg || paper};
  &::after {
    content: "";
    grid-area: 1 / 2;
    margin: 1px;
    pointer-events: none;
    background: ${(q) => q.$caret || bar};
  }
  &::before {
    content: "";
    grid-area: 1 / 2;
    place-self: center;
    z-index: 1;
    width: 10px;
    height: 6px;
    pointer-events: none;
    background: #6d7282;
    clip-path: polygon(0 0, 100% 0, 50% 100%);
  }
`;
const Select = styled.select`
  grid-area: 1 / 1 / 2 / 3;
  appearance: none;
  width: 100%;
  min-width: 0;
  border: 0;
  padding: 0 0 0 4px;
  background: none;
  color: ${(q) => q.$color || "#1e1e1e"};
  font-size: ${(q) => q.$fs || 23}px;
  line-height: 28px;
`;
function Dropdown({ label, value, id, fs, color, ...box }) {
  return (
    <SelectBox {...box}>
      <Select id={id} aria-label={label} $fs={fs} $color={color} defaultValue={value}>
        <option>{value}</option>
      </Select>
    </SelectBox>
  );
}

/* ---------- work area ---------- */
const Work = styled.div`
  display: flex;
  flex: 1;
  min-height: 0;
`;
const Main = styled.div`
  display: flex;
  flex-direction: column;
  flex: 1;
  min-width: 0;
`;
const Panes = styled.div`
  display: flex;
  flex: 1;
  min-height: 0;
`;
const PanelHead = styled.div`
  display: flex;
  align-items: center;
  flex: none;
  height: 40px;
  padding: 0 2px 0 ${(q) => q.$pl || 4}px;
  background: ${header};
  color: #fff;
`;
const PanelTitle = styled.h2`
  flex: 1;
  margin: 0;
  font-size: 21px;
  font-weight: 400;
`;
function PanelHeader({ title, pl }) {
  return (
    <PanelHead $pl={pl}>
      <PanelTitle>{title}</PanelTitle>
      <IconButton $w={36} $h={36} aria-label={`${title} options`}><Icon name="caret" size={32} /></IconButton>
      <IconButton $w={36} $h={36} aria-label={`Pin ${title}`}><Icon name="pin" size={32} /></IconButton>
      <IconButton $w={36} $h={36} aria-label={`Close ${title}`}><Icon name="close" size={32} /></IconButton>
    </PanelHead>
  );
}

/* ---------- tools ---------- */
const Tools = styled.aside`
  flex: none;
  width: 352px;
  background: ${paper};
  border-right: 2px solid ${dock};
`;
const ToolsBody = styled.div`
  border: solid ${edge};
  border-width: 1px 1px 0 1px;
  height: calc(100% - 40px);
`;
const ToolSearch = styled.label`
  display: flex;
  align-items: center;
  height: 53px;
  border-bottom: 2px solid ${edge};
`;
const ToolInput = styled.input`
  flex: 1;
  min-width: 0;
  padding: 0 0 0 12px;
  border: 0;
  background: none;
  font-size: 21px;
  outline: 0;
  &::placeholder { color: #777; opacity: 1; }
`;
const SectionHead = styled.button`
  display: flex;
  align-items: center;
  width: 100%;
  height: 36px;
  padding: 0 0 0 9px;
  border: 0;
  background: none;
  font-size: 22px;
  font-weight: 700;
  text-align: left;
`;
const Twist = styled.span`
  width: 14px;
  height: 14px;
  margin-right: 7px;
  background: #97a8d0;
  clip-path: ${(q) => (q.$open ? "polygon(100% 0, 100% 100%, 0 100%)" : "polygon(7% 0, 78% 50%, 7% 100%, 7% 0, 14% 12%, 14% 88%, 66% 50%, 14% 12%)")};
`;
const ToolGrid = styled.div`
  display: grid;
  grid-template-columns: repeat(5, 60px);
  padding: 7px 0 13px 8px;
`;

const SECTIONS = [
  ["Auxiliary-lines", "aLine aAngle aPerp aPar aCross aCirc2 aCirc aLineCirc aTang"],
  ["Elements", "eLine ePoly eRect eRect9 eL ePenta eCirc2 eCirc eLineCirc eTang eP eArc eArcA eEll eS eCloud"],
  ["Construction parts", "cWall cSlab cHole cCol cBeam cRoof cDorm cRHole cHip cRaft cChim cWin cGrid cDoor cNiche cStair cStairR cRoom cRoomS cRoomB"],
  ["Extended wall functions"],
  ["Extended roof functions"],
  ["Lay-out", "lA lDim lHatch lCut lLabel lLead lLevel lPoint lDia lRad lArc lAng lTo lDim2 lBack"],
  ["Freeform", "fFlat fTube fSolid fRev fRev2 fSweep fPipe fShell fViews fViews2 fBool fSpring f3d fCurve"],
  ["Terrain"],
  ["Renovation planning"],
  ["Camera"],
  ["Quantities", "qCalc qBookDb qBook qArea qAreaG qRoomOk qColOk qColDel"],
  ["BIM Tools"],
  ["3D Platforms"],
];

function ToolsPanel() {
  return (
    <Tools>
      <PanelHeader title="Tools" />
      <ToolsBody>
        <ToolSearch>
          <ToolInput placeholder="Search" aria-label="Search tools" />
          <Icon name="search" size={44} />
        </ToolSearch>
        {SECTIONS.map(([name, icons]) => (
          <section key={name}>
            <SectionHead aria-expanded={!!icons}><Twist $open={!!icons} />{name}</SectionHead>
            {icons && (
              <ToolGrid>
                {icons.split(" ").map((n) => (
                  <IconButton key={n} $w={60} aria-label={n}><Icon name={n} /></IconButton>
                ))}
              </ToolGrid>
            )}
          </section>
        ))}
      </ToolsBody>
    </Tools>
  );
}

/* ---------- drawing area ---------- */
const Center = styled.main`
  display: flex;
  flex-direction: column;
  flex: 1;
  min-width: 0;
`;
const Canvas = styled.div`
  flex: 1;
  min-height: 0;
  padding: 0 273px;
  background: #fff;
`;
const Sheet = styled.div`
  position: relative;
  height: 100%;
  border: solid #000;
  border-width: 1px 1px 0;
  &::before {
    content: "";
    position: absolute;
    top: -1px;
    left: 507px;
    width: 64px;
    height: 1px;
    background: #fff;
  }
  &::after {
    content: "";
    position: absolute;
    top: 0;
    left: 538px;
    width: 1px;
    height: 30px;
    background: #000;
  }
`;
const ViewTabs = styled.div`
  display: flex;
  align-items: flex-start;
  justify-content: space-between;
  flex: none;
  height: 41px;
  background: ${dock};
`;
const ViewTab = styled.div`
  display: flex;
  align-items: center;
  height: 36px;
  padding-left: 49px;
  background: #eee;
  clip-path: polygon(0 0, 100% 0, 100% 100%, 38px 100%);
  color: #000;
  font-size: 22px;
  font-weight: 700;
`;
const TabName = styled.span`
  padding: 0 9px 0 13px;
`;
const TabList = styled.button`
  width: 22px;
  height: 40px;
  padding: 0;
  border: 0;
  background: none;
  &::after {
    content: "";
    display: block;
    width: 18px;
    height: 10px;
    background: #fff;
    clip-path: polygon(0 0, 100% 0, 50% 100%);
  }
`;
const ViewButton = styled(IconButton)`
  width: 53px;
  height: 53px;
  margin: 0 1px;
  ${(q) => q.$on && css`background: #b4c5fd; border-color: #0a78d6;`}
`;
const CommandRow = styled.div`
  display: flex;
  align-items: center;
  gap: 8px;
  flex: none;
  height: 59px;
  padding: 0 8px 6px 9px;
  background: ${bar};
`;
const Command = styled.input`
  flex: 1;
  min-width: 0;
  height: 42px;
  border: 0;
  border-top: 2px solid #fff;
  border-bottom: 2px solid #858585;
  background: #efefef;
`;

const VIEW = "viewSet zoomWin zoomPrev zoomPart zoomAll walk vr sheet origin printPen hidden shadeFlat shade wire wireAll sphere *wallView axC axT axDoor axDots axPick axDots2 axArrows cage cubeRot axV penRot gridPts *vA *vLead *vDim *vHatch";

function CenterPane() {
  return (
    <Center>
      <Canvas><Sheet /></Canvas>
      <ViewTabs>
        <ViewTab>
          <Icon name="wallTab" size={40} field={44} />
          <TabName>Design model</TabName>
          <IconButton $w={38} $h={36} aria-label="Close view"><Icon name="closeTab" size={32} /></IconButton>
        </ViewTab>
        <TabList aria-label="List of views" />
      </ViewTabs>
      <Toolbar $h={69} $pl={9} $pt={5}>
        {VIEW.split(" ").map((n) => {
          const name = n.replace("*", "");
          return <ViewButton key={name} $on={n !== name} aria-label={name}><Icon name={name} size={53} /></ViewButton>;
        })}
        <Spacer />
        <IconButton $w={72} aria-label="Project type"><Icon name="rail" /></IconButton>
        <Dropdown label="Project" value="Construction project" $w={382} $cap={32} fs={22} />
        <Rule $m={4} $h={0} />
        <Dropdown label="Restriction" value="No restriction" $w={384} $edge="#8f949f" $bg="#f2f4fa" $caret="#efefef" fs={22} color="#777" />
        <Rule $m={3} $h={0} />
      </Toolbar>
      <CommandRow>
        <Command aria-label="Command" />
        <Dropdown label="Scale" value="1:100" $w={334} fs={22} />
        <Dropdown label="Unit" value="cm" $w={248} fs={22} />
        <Dropdown label="Paper" value="A3" $w={246} fs={22} />
      </CommandRow>
    </Center>
  );
}

/* ---------- right dock ---------- */
const Dock = styled.aside`
  display: flex;
  flex-direction: column;
  flex: none;
  width: 442px;
  padding-left: 2px;
  background: ${dock};
`;
const StoreyBody = styled.div`
  flex: none;
  height: 484px;
  background: #f0f0f0;
`;
const StoreyTable = styled.table`
  height: 100%;
  border-collapse: collapse;
  color: #000;
`;
const StoreyCell = styled.td`
  width: 66px;
  height: 40px;
  padding: 0;
  border-right: 2px solid #c8c8c8;
  text-align: center;
  & > svg { margin: auto; }
`;
const StoreyHeadCell = styled(StoreyCell)`
  height: 51px;
  background: ${bar};
  border-right-color: #fff;
  border-bottom: 1px solid #c8c8c8;
`;
const StoreyRestCell = styled(StoreyCell)`
  height: auto;
`;
const DockTabs = styled.div`
  display: grid;
  grid-template-columns: ${(q) => q.$cols};
  flex: none;
  height: ${(q) => q.$h}px;
  padding-bottom: 4px;
`;
const DockTab = styled.button`
  display: flex;
  align-items: center;
  gap: 6px;
  min-width: 0;
  padding: 0 0 0 5px;
  border: 0;
  background: ${(q) => (q.$on ? paper : "none")};
  color: ${(q) => (q.$on ? "#0a64b4" : "#dfe4f4")};
  font-size: 21px;
  white-space: nowrap;
`;
const Layers = styled.div`
  display: grid;
  grid-template-columns: 1fr 34px;
  grid-template-rows: 1fr 34px;
  flex: 1;
  min-height: 0;
  border: 1px solid #666;
  background: #f0f0f0;
`;
const LayerList = styled.ul`
  overflow: hidden;
  background: #fff;
  color: #000;
`;
const LayerRow = styled.li`
  display: flex;
  align-items: center;
  height: 36px;
  padding-left: ${(q) => (q.$root ? 0 : 47)}px;
  background: ${(q) => (q.$root ? bar : "none")};
  color: ${(q) => (q.$current ? B : q.$root ? "#1e1e1e" : "#000")};
  font-weight: ${(q) => (q.$current || q.$root ? 700 : 400)};
  font-size: ${(q) => (q.$current || q.$root ? 22 : 23)}px;
`;
const LayerName = styled.span`
  padding-left: 6px;
`;
const VTrack = styled.div`
  display: flex;
  justify-content: center;
  padding-top: 34px;
  &::after {
    content: "";
    width: 20px;
    height: 514px;
    background: #868686;
  }
`;
const HTrack = styled.div`
  display: flex;
  align-items: center;
  padding-left: 34px;
  &::after {
    content: "";
    width: 310px;
    height: 20px;
    background: #868686;
  }
`;
const FilterBar = styled(Toolbar)`
  border-top: 10px solid #f0f0f0;
`;
const FilterMenu = styled.button`
  width: 20px;
  height: 40px;
  margin: 0 9px 0 auto;
  padding: 8px 0 0;
  border: 0;
  align-self: flex-start;
  background: none;
  &::after {
    content: "";
    display: block;
    height: 11px;
    background: ${K};
    clip-path: polygon(0 0, 100% 0, 50% 100%);
  }
`;
const FilterResult = styled.div`
  flex: none;
  height: 86px;
  border: 1px solid #555;
  background: #fff;
`;

const LAYERS = ["Terrain", "Wall", "Column", "Girder", "Slab", "Roof", "Wood construct", "Steel construct", "Chimney", "Stair", "Window", "Int. glass elements", "Door", "Room", "Naming", "Dimensioning", "Furniture", "Equipment", "Kitchen", "Struct.parts", "Constr_part", "Plan graphic", "Symbol", "Detail"];

function RightDock() {
  return (
    <Dock>
      <PanelHeader title="Storey" pl={10} />
      <Toolbar $h={68}>
        <IconButton $w={64} aria-label="Storey book"><Icon name="sBook" /></IconButton>
        <IconButton $w={64} aria-label="Storey settings"><Icon name="sSet" /></IconButton>
        <IconButton $w={64} aria-label="Move storey"><Icon name="sUp" /></IconButton>
        <Rule $h={36} $c="#fff" $m={2} />
        <IconButton $w={64} aria-label="Storey list"><Icon name="sList" /></IconButton>
        <IconButton $w={64} aria-label="Storey tree"><Icon name="sTree" /></IconButton>
        <Rule $h={36} $c="#fff" $m={2} />
        <IconButton $w={64} aria-label="Invert"><Icon name="invert" /></IconButton>
      </Toolbar>
      <StoreyBody>
        <StoreyTable>
          <tbody>
            <tr><StoreyHeadCell><Icon name="planeGrey" size={38} /></StoreyHeadCell><StoreyHeadCell><Icon name="boxGrey" size={38} /></StoreyHeadCell></tr>
            <tr><StoreyCell /><StoreyCell><Icon name="planeUp" size={38} /></StoreyCell></tr>
            <tr><StoreyCell>1</StoreyCell><StoreyCell><Icon name="lvl" size={34} field={40} /></StoreyCell></tr>
            <tr><StoreyCell>0</StoreyCell><StoreyCell><Icon name="lvlOn" size={34} field={40} /></StoreyCell></tr>
            <tr><StoreyCell>-1</StoreyCell><StoreyCell><Icon name="lvl" size={34} field={40} /></StoreyCell></tr>
            <tr><StoreyRestCell /><StoreyRestCell /></tr>
          </tbody>
        </StoreyTable>
      </StoreyBody>
      <DockTabs $cols="142px 146px 1fr" $h={58}>
        <DockTab $on><Icon name="tabStorey" size={54} />Storey</DockTab>
        <DockTab><Icon name="tabDime" size={54} />Dime...</DockTab>
        <DockTab><Icon name="tabWork" size={54} />Work ...</DockTab>
      </DockTabs>
      <PanelHeader title="Layer" pl={10} />
      <Toolbar $h={68}>
        <IconButton $w={68} aria-label="New folder"><Icon name="layFold" /></IconButton>
        <IconButton $w={62} aria-label="New layer"><Icon name="layPlane" /></IconButton>
        <Rule $h={36} $c="#fff" $m={1} />
        <IconButton $w={64} aria-label="Invert layers"><Icon name="invert" /></IconButton>
        <Rule $h={36} $c="#fff" $m={2} />
        <IconButton $w={64} aria-label="Layer database"><Icon name="layDb" /></IconButton>
        <IconButton $w={60} aria-label="Sort"><Icon name="layAZ" /></IconButton>
        <IconButton $w={36} aria-label="Sort options"><Icon name="drop" size={30} /></IconButton>
      </Toolbar>
      <Layers>
        <LayerList>
          <LayerRow $root>
            <Icon name="chevron" size={32} /><Icon name="layerFolder" size={34} /><Icon name="eye" size={34} /><Icon name="lock" size={34} />
            <LayerName>Design</LayerName>
          </LayerRow>
          {LAYERS.map((n, i) => (
            <LayerRow key={n} $current={i === 0}>
              <Icon name={i ? "plane" : "planeOn"} size={34} /><Icon name="eye" size={34} /><Icon name="lock" size={34} />
              <LayerName>{n}</LayerName>
            </LayerRow>
          ))}
        </LayerList>
        <VTrack />
        <HTrack />
      </Layers>
      <FilterBar $h={77}>
        <IconButton $w={64} aria-label="Add filter"><Icon name="funnel" /></IconButton>
        <IconButton $w={64} aria-label="Remove filter"><Icon name="bigX" size={54} field={66} /></IconButton>
        <FilterMenu aria-label="Filter menu" />
      </FilterBar>
      <FilterResult />
      <DockTabs $cols="repeat(5, 1fr)" $h={55}>
        {["bBlocks", "layers", "bBooks", "bMat", "bSphere"].map((n) => (
          <DockTab key={n} $on={n === "layers"} aria-label={n}><Icon name={n} size={51} />...</DockTab>
        ))}
      </DockTabs>
    </Dock>
  );
}

const SideStrip = styled.nav`
  display: flex;
  flex-direction: column;
  flex: none;
  gap: 20px;
  width: 70px;
  padding-top: 7px;
  background: ${dock};
`;
const SideTab = styled.button`
  display: flex;
  flex-direction: column;
  align-items: center;
  gap: ${(q) => q.$gap}px;
  height: ${(q) => q.$h}px;
  padding: 0 8px 0 0;
  border: 0;
  border-right: 6px solid #3d527d;
  background: none;
  color: #fff;
  font-family: "Liberation Sans", Arial, sans-serif;
  font-size: 23px;
`;
const SideText = styled.span`
  writing-mode: vertical-rl;
`;

/* ---------- status ---------- */
const StatusBar = styled.footer`
  display: flex;
  align-items: center;
  gap: 14px;
  flex: none;
  height: 37px;
  padding: 3px 3px 0 4px;
  background: ${status};
  color: #fff;
  font-size: 21px;
`;
const Dim = styled.span`
  margin-left: -6px;
  color: #8094e0;
`;
const Coord = styled.span`
  margin-right: 46px;
`;

/* ---------- dialog ---------- */
const Dialog = styled.section`
  position: absolute;
  top: 50%;
  left: 50%;
  display: flex;
  flex-direction: column;
  width: 1298px;
  transform: translate(-50%, -50%);
  background: #e7ecf7;
  border: 2px solid #bac6e6;
`;
const DialogHead = styled.div`
  display: flex;
  justify-content: space-between;
  height: 56px;
  padding-left: 18px;
  background: ${bar};
`;
const DialogTitle = styled.h2`
  margin: 0;
  padding-top: 18px;
  font-size: 22px;
  font-weight: 400;
  color: #93a5cf;
`;
const DialogBody = styled.div`
  display: flex;
  padding: 0 0 16px 10px;
`;
const Tree = styled.ul`
  width: 440px;
  height: 760px;
  padding: 0 0 0 18px;
  background: ${paper};
  border: 2px solid #bac6e6;
  color: #000;
`;
const Branch = styled.li`
  position: relative;
  &:not(:last-child)::before {
    content: "";
    position: absolute;
    top: 24px;
    bottom: -24px;
    left: 9px;
    border-left: 1px dotted #777;
  }
`;
const TreeRow = styled.div`
  display: flex;
  align-items: center;
  height: 48px;
`;
const Expander = styled.button`
  position: relative;
  width: 18px;
  height: 18px;
  padding: 0;
  border: 1px solid #999;
  background:
    linear-gradient(#3a5aa8, #3a5aa8) center / 10px 2px no-repeat,
    linear-gradient(#3a5aa8, #3a5aa8) center / ${(q) => (q.$open ? "0 0" : "2px 10px")} no-repeat,
    #f0f0f0;
`;
const Stub = styled.span`
  width: ${(q) => q.$w}px;
  border-top: 1px dotted #777;
`;
const Leaves = styled.ul`
  height: 216px;
  margin: 0 0 -24px 60px;
  border-left: 1px dotted #777;
`;
const LeafEnd = styled.div`
  height: 48px;
`;
const TreeLabel = styled.span`
  display: flex;
  align-items: center;
  height: 48px;
  padding: 1px 2px 0 3px;
  background: ${(q) => (q.$on ? bar : "none")};
`;
const Pane = styled.form`
  display: flex;
  flex-direction: column;
  justify-content: space-between;
  flex: 1;
  padding: 15px 39px 8px 0;
`;
const Group = styled.fieldset`
  margin: 0 0 0 30px;
  padding: 1px 6px 2px 33px;
  border: 2px solid #bac6e6;
  border-radius: 4px;
`;
const Legend = styled.legend`
  margin-left: -19px;
  padding: 0 8px;
  line-height: 28px;
`;
const Field = styled.div`
  display: flex;
  align-items: ${(q) => (q.$mid ? "center" : "flex-end")};
  margin-bottom: ${(q) => q.$gap}px;
`;
const FieldLabel = styled.label`
  width: ${(q) => (q.$wide ? 481 : 316)}px;
`;
const NumberBox = styled.input`
  width: 102px;
  height: 52px;
  padding: 0 0 10px 8px;
  border: 2px solid #bac6e6;
  background: ${paper};
`;
const CheckLabel = styled.label`
  display: flex;
  align-items: center;
  gap: 5px;
  width: max-content;
  height: ${(q) => q.$h || 48}px;
  margin-left: ${(q) => q.$ml || 0}px;
  margin-bottom: ${(q) => q.$gap || 0}px;
`;
const Check = styled.input`
  appearance: none;
  display: grid;
  place-items: center;
  width: 24px;
  height: 24px;
  background: #fff;
  border: 2px solid #9aacd6;
  &:checked::before {
    content: "";
    width: 16px;
    height: 14px;
    background: #555;
    clip-path: polygon(0 45%, 20% 38%, 38% 66%, 84% 0, 100% 10%, 42% 100%, 34% 100%);
  }
`;
function CheckField({ children, on, ...rest }) {
  return <CheckLabel {...rest}><Check type="checkbox" defaultChecked={on} />{children}</CheckLabel>;
}
const Footer = styled.div`
  display: flex;
  align-items: center;
  gap: 5px;
  padding: 0 3px 0 10px;
  & > label { margin-right: auto; }
`;
const PushButton = styled.button`
  width: 164px;
  height: 57px;
  padding: 0;
  background: ${bar};
  border: 2px solid #9fb0da;
`;

const LEAVES = [["config", "Configuration"], ["gear", "General"], ["monitor", "User interface", true], ["tips", "Tooltips/Help"], ["globe", "Region"]];

function OptionsDialog() {
  return (
    <Dialog role="dialog" aria-label="Options">
      <DialogHead>
        <DialogTitle>Options - System - User interface</DialogTitle>
        <IconButton $w={72} $h={44} type="button" aria-label="Close dialog"><Icon name="close" size={32} /></IconButton>
      </DialogHead>
      <DialogBody>
        <Tree>
          <Branch>
            <TreeRow><Expander $open aria-label="Collapse System" /><Stub $w={17} /><Icon name="folderOpen" size={50} /><TreeLabel>System</TreeLabel></TreeRow>
            <Leaves>
              {LEAVES.map(([icon, name, on]) => (
                <li key={name}>
                  <TreeRow><Stub $w={25} /><Icon name={icon} size={50} /><TreeLabel $on={on}>{name}</TreeLabel></TreeRow>
                </li>
              ))}
            </Leaves>
            <LeafEnd />
          </Branch>
          {["Save/Load", "Work parameters", "Depiction", "Views"].map((n) => (
            <Branch key={n}>
              <TreeRow><Expander aria-label={`Expand ${n}`} /><Stub $w={17} /><Icon name="folderShut" size={50} /><TreeLabel>{n}</TreeLabel></TreeRow>
            </Branch>
          ))}
        </Tree>
        <Pane onSubmit={(e) => e.preventDefault()}>
          <Group>
            <Legend>User interface general</Legend>
            <Field $gap={24}>
              <FieldLabel htmlFor="layout">View layout</FieldLabel>
              <Dropdown id="layout" value="Tabbed views" $w={416} />
            </Field>
            <Field $mid $gap={4}>
              <FieldLabel $wide htmlFor="maxViews">Maximal opened views</FieldLabel>
              <NumberBox id="maxViews" defaultValue="16" />
            </Field>
            <CheckField>Always show new views in new windows</CheckField>
            <CheckField on $gap={12}>Colourise tabs by view type</CheckField>
            <Field $gap={12}>
              <FieldLabel htmlFor="design">User interface design</FieldLabel>
              <Dropdown id="design" value="Technical - blue" $w={268} />
            </Field>
            <CheckField on $h={40} $ml={316}>Also in dialog windows</CheckField>
            <CheckField>Use scroll bar for graphic window</CheckField>
            <CheckField on>Show notifications as info balloon</CheckField>
            <CheckField on>Show welcome screen at startup</CheckField>
          </Group>
          <Footer>
            <CheckField on>Extended</CheckField>
            <PushButton type="button">OK</PushButton>
            <PushButton type="button">Cancel</PushButton>
            <PushButton type="button">Help</PushButton>
          </Footer>
        </Pane>
      </DialogBody>
    </Dialog>
  );
}

/* ---------- page ---------- */
const MENU = ["File", "Edit", "View", "Insert", "Draw", "AR Objects", "Modify", "Lay-out", "Information", "Extras", "Settings", "Window", "Key combinations", "?"];
const MAIN = "new open save print preview openRecent saveRecent | cut copy paste | undo redo > plus minus | move duplicate rotate mirror scale group | stretch trim extend extendAll eraser partErase > vTop vFront vLeft vBack vRight vBottom pyramid vPrev vNext cPrev cNext > storeyCopy heightSet paint house text3 fillet d3 bulb camera +";
const SELECT = "stop *select layers rect nodes pick >";

function buttons(list) {
  return list.split(" ").map((n, i) => {
    if (n === "|") return <Rule key={i} />;
    if (n === "+") return <More key={i} aria-label="More" />;
    if (n === ">") return <React.Fragment key={i}><More aria-label="More" /><Grip /></React.Fragment>;
    const name = n.replace("*", "");
    return <IconButton key={i} $on={n !== name} aria-label={name}><Icon name={name} size={56} /></IconButton>;
  });
}

export default function App() {
  return (
    <Shell>
      <Global />
      <TitleBar>
        <AppIcons><Icon name="appA" size={46} /><Icon name="appE" size={46} /></AppIcons>
        <Title>{"Proj:<CAD_Object4> Struct:<House>  Storey:<GF>  File:<unnamed.d> ELITECAD - [Design model]"}</Title>
        <TopSearch>
          <Icon name="searchTop" size={34} />
          <TopInput placeholder="What would you like to do?" aria-label="What would you like to do?" />
        </TopSearch>
        <IconButton $w={68} $h={44} aria-label="Information"><Icon name="help" size={44} /></IconButton>
        <IconButton $w={74} $h={44} aria-label="Minimise"><Icon name="min" size={40} /></IconButton>
        <IconButton $w={72} $h={44} aria-label="Restore"><Icon name="restore" size={40} /></IconButton>
        <IconButton $w={70} $h={44} aria-label="Close"><Icon name="closeWin" size={40} /></IconButton>
      </TitleBar>
      <MenuBar>{MENU.map((m) => <MenuItem key={m}>{m}</MenuItem>)}</MenuBar>
      <Toolbar><Grip />{buttons(MAIN)}</Toolbar>
      <Toolbar $h={65}>
        <Grip />
        {buttons(SELECT)}
        <Spacer $grow={64} />
        <Grip />
        <IconButton aria-label="Layers"><Icon name="layers" size={56} /></IconButton>
        <Dropdown label="Active layer" value="Terrain" $w={310} fs={22} />
        <Rule $m={20} $h={0} />
        <Grip />
        <Spacer $grow={27} />
      </Toolbar>
      <Work>
        <Main>
          <Panes>
            <ToolsPanel />
            <CenterPane />
            <RightDock />
          </Panes>
          <StatusBar>
            <span>Ready</span>
            <Spacer />
            <Coord>Z-10</Coord>
            <span>GPU 9.0GB free</span>
            <span>NUM</span>
            <Dim>UF</Dim>
          </StatusBar>
        </Main>
        <SideStrip>
          <SideTab $h={176} $gap={4}><Icon name="info" size={44} /><SideText>Info window</SideText></SideTab>
          <SideTab $h={166} $gap={12}><Icon name="props" size={44} /><SideText>Properties</SideText></SideTab>
        </SideStrip>
      </Work>
      <OptionsDialog />
    </Shell>
  );
}
